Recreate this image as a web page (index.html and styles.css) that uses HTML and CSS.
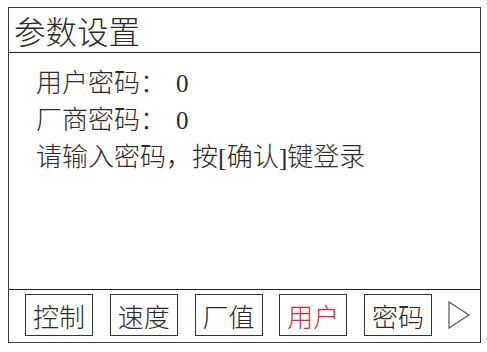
FILE: index.html
```html
<!DOCTYPE html>
<html lang="zh-CN">
<head>
<meta charset="utf-8">
<title>参数设置</title>
<link rel="stylesheet" href="styles.css">
</head>
<body>
<div class="panel">
  <div class="header">参数设置</div>
  <div class="content">
    <div class="line">用户密码：<span class="val">0</span></div>
    <div class="line">厂商密码：<span class="val">0</span></div>
    <div class="line">请输入密码，按[确认]键登录</div>
  </div>
  <div class="footer">
    <div class="btn">控制</div>
    <div class="btn">速度</div>
    <div class="btn">厂值</div>
    <div class="btn active">用户</div>
    <div class="btn">密码</div>
    <svg class="next" width="22" height="28" viewBox="0 0 22 28">
      <polygon points="1,1 21,14 1,27" fill="none" stroke="#555" stroke-width="1.2"/>
    </svg>
  </div>
</div>
</body>
</html>
```
FILE: styles.css
```css
html, body {
  margin: 0;
  padding: 0;
  background: #ffffff;
}
body {
  padding: 7px 0 0 8px;
  font-family: "Liberation Serif", "Noto Sans CJK SC", serif;
  color: #2a2a2a;
}
.panel {
  width: 473px;
  height: 336px;
  box-sizing: border-box;
  border: 1px solid #3a3a3a;
  display: flex;
  flex-direction: column;
}
.header {
  height: 45px;
  box-sizing: border-box;
  border-bottom: 1px solid #222;
  font-family: "Noto Sans CJK SC", sans-serif;
  font-weight: 300;
  font-size: 31.5px;
  line-height: 44px;
  padding-left: 5px;
}
.content {
  flex: 1;
  padding: 12px 0 0 27px;
  font-size: 26px;
  line-height: 37px;
  font-weight: 300;
}
.val {
  margin-left: 10px;
  font-weight: 400;
  font-size: 25px;
}
.footer {
  height: 53px;
  box-sizing: border-box;
  border-top: 1px solid #222;
  display: flex;
  align-items: flex-start;
  padding: 4px 0 0 16px;
  gap: 16.75px;
}
.btn {
  width: 68px;
  height: 42px;
  box-sizing: border-box;
  border: 1px solid #333;
  display: flex;
  align-items: center;
  justify-content: center;
  font-family: "Noto Sans CJK SC", sans-serif;
  font-weight: 300;
  font-size: 26px;
  color: #2a2a2a;
}
.btn.active {
  color: #d9283c;
}
.next {
  margin-top: 7px;
  margin-left: -1px;
}
```
